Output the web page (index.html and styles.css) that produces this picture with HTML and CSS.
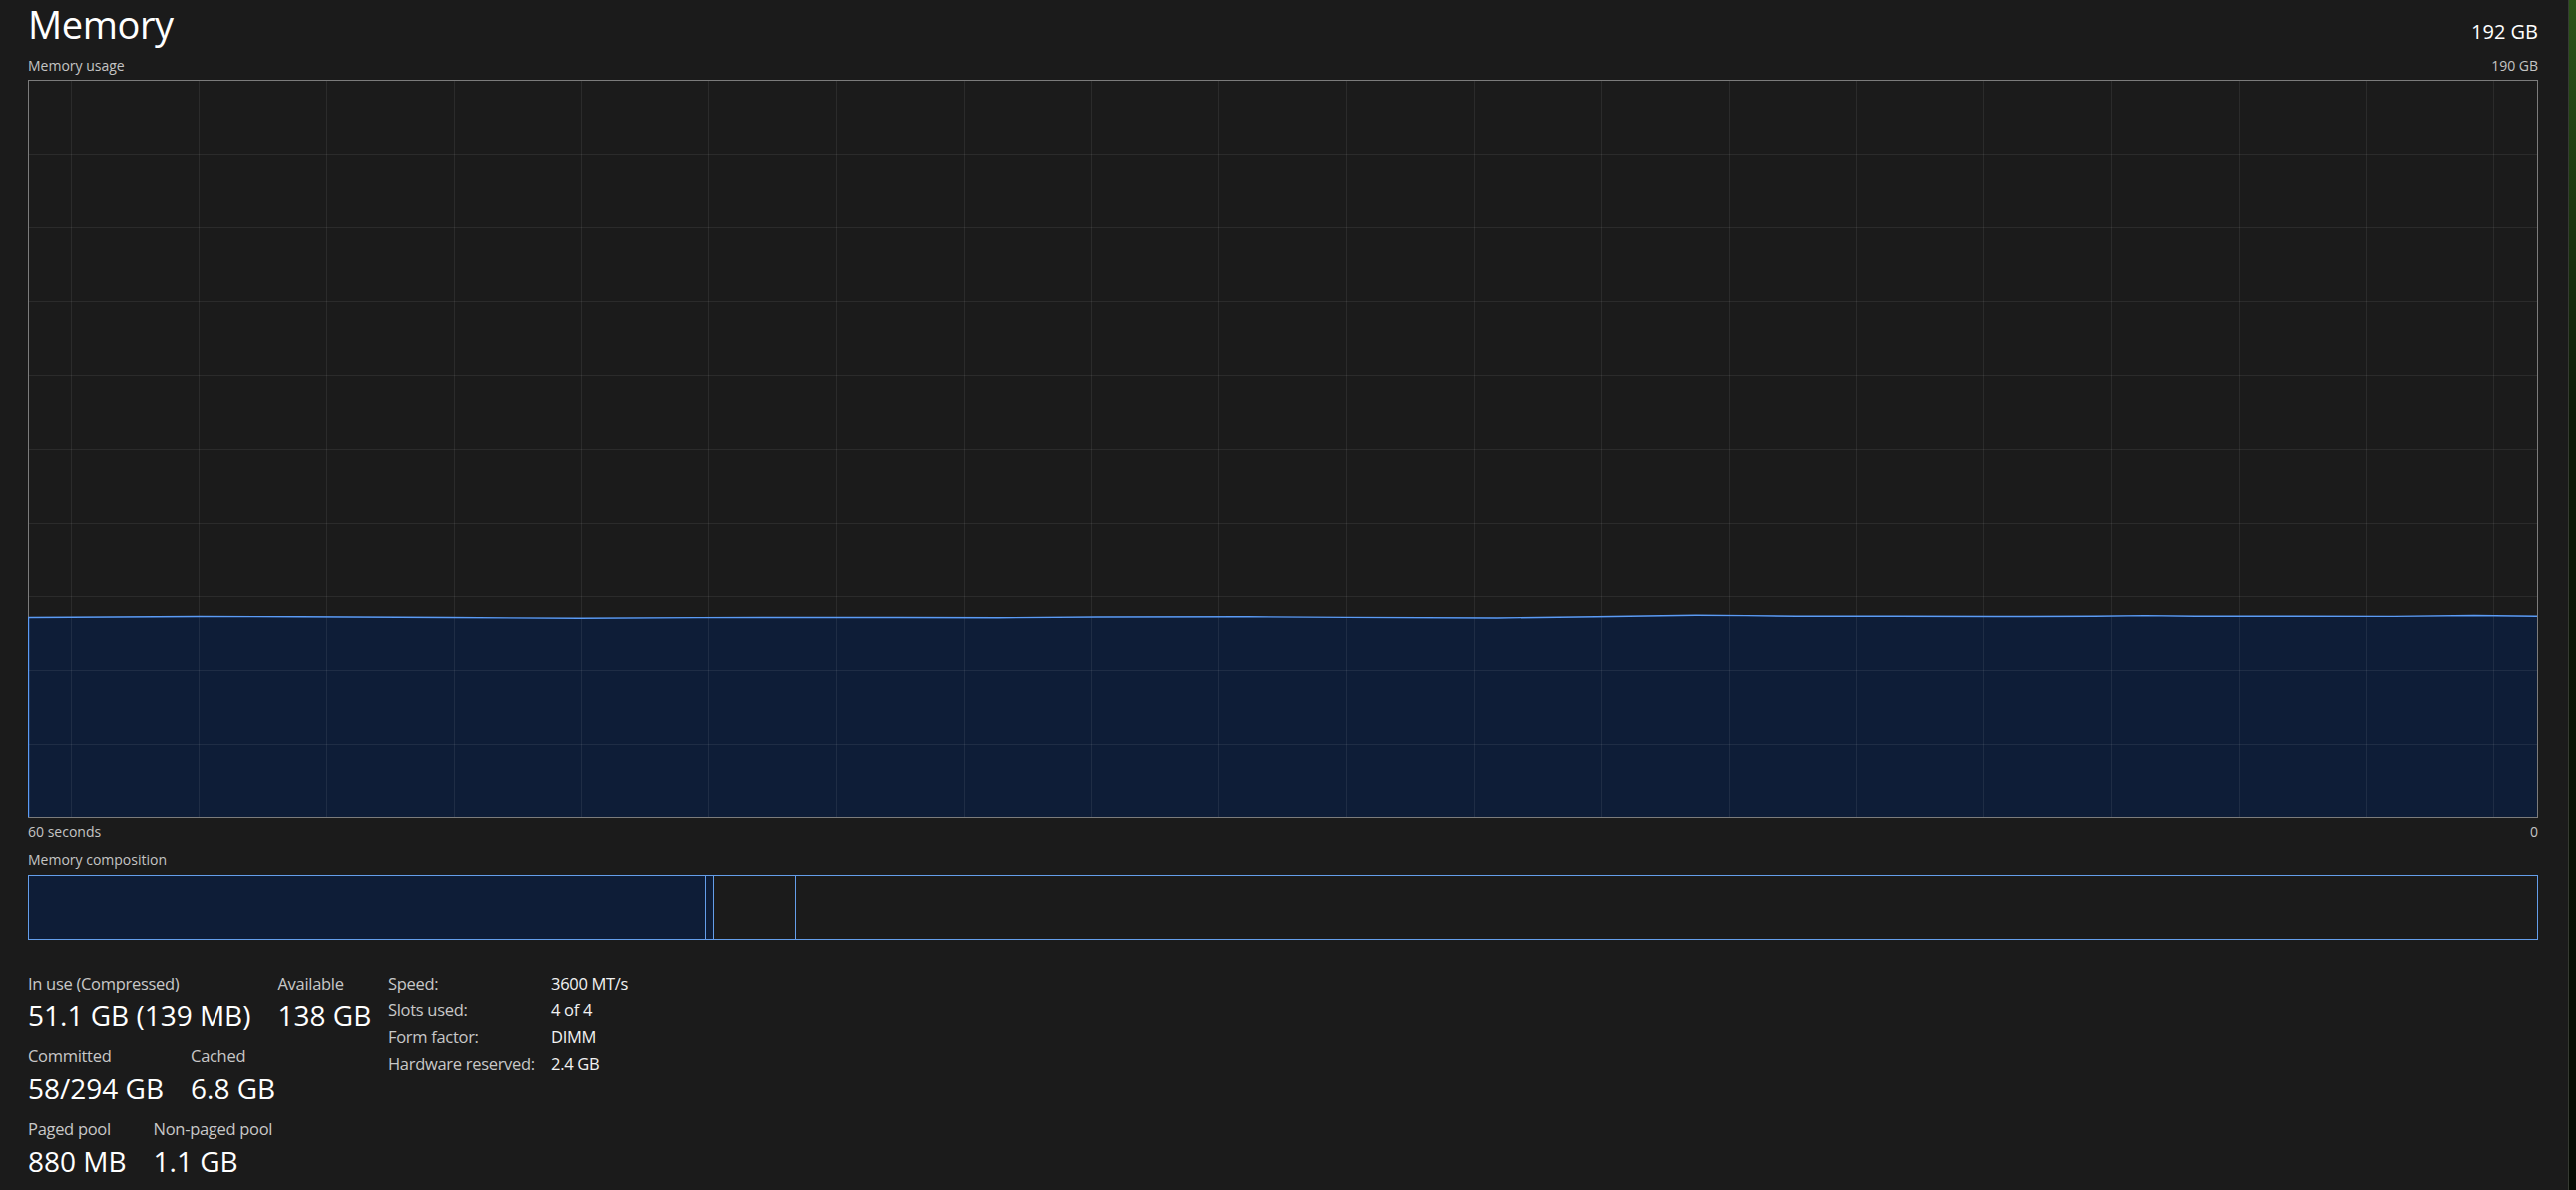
FILE: index.html
```html
<!DOCTYPE html>
<html lang="en">
<head>
    <meta charset="UTF-8">
    <meta name="viewport" content="width=device-width, initial-scale=1.0">
    <title>Memory</title>
    <link rel="stylesheet" href="styles.css">
</head>
<body>
    <div class="window">
        <header class="head">
            <h1 class="title">Memory</h1>
            <span class="total">192 GB</span>
        </header>

        <div class="axis-row axis-top">
            <span>Memory usage</span>
            <span>190 GB</span>
        </div>

        <div class="graph">
            <svg width="2516" height="740" viewBox="0 0 2516 740">
                <!-- used memory area -->
                <polygon class="area" points="0.5,539.5 172,538.5 272,538.8 422,539.5 552,540.3 672,539.6 872,539.5 972,539.8 1072,539 1222,538.7 1322,539.4 1472,540 1572,538.7 1672,537.3 1722,537.6 1772,538.3 1872,538.3 1972,538.5 2072,538.3 2122,537.6 2172,538.3 2272,538.3 2372,538.4 2452,537.5 2515,538.3 2515,739 0.5,739"/>

                <g class="grid">
                    <line x1="1" y1="74.5" x2="2515" y2="74.5"/>
                    <line x1="1" y1="148.5" x2="2515" y2="148.5"/>
                    <line x1="1" y1="222.5" x2="2515" y2="222.5"/>
                    <line x1="1" y1="296.5" x2="2515" y2="296.5"/>
                    <line x1="1" y1="370.5" x2="2515" y2="370.5"/>
                    <line x1="1" y1="444.5" x2="2515" y2="444.5"/>
                    <line x1="1" y1="518.5" x2="2515" y2="518.5"/>
                    <line x1="1" y1="592.5" x2="2515" y2="592.5"/>
                    <line x1="1" y1="666.5" x2="2515" y2="666.5"/>

                    <line x1="43.5" y1="1" x2="43.5" y2="739"/>
                    <line x1="171.5" y1="1" x2="171.5" y2="739"/>
                    <line x1="299.5" y1="1" x2="299.5" y2="739"/>
                    <line x1="427.5" y1="1" x2="427.5" y2="739"/>
                    <line x1="554.5" y1="1" x2="554.5" y2="739"/>
                    <line x1="682.5" y1="1" x2="682.5" y2="739"/>
                    <line x1="810.5" y1="1" x2="810.5" y2="739"/>
                    <line x1="938.5" y1="1" x2="938.5" y2="739"/>
                    <line x1="1066.5" y1="1" x2="1066.5" y2="739"/>
                    <line x1="1193.5" y1="1" x2="1193.5" y2="739"/>
                    <line x1="1321.5" y1="1" x2="1321.5" y2="739"/>
                    <line x1="1449.5" y1="1" x2="1449.5" y2="739"/>
                    <line x1="1577.5" y1="1" x2="1577.5" y2="739"/>
                    <line x1="1705.5" y1="1" x2="1705.5" y2="739"/>
                    <line x1="1832.5" y1="1" x2="1832.5" y2="739"/>
                    <line x1="1960.5" y1="1" x2="1960.5" y2="739"/>
                    <line x1="2088.5" y1="1" x2="2088.5" y2="739"/>
                    <line x1="2216.5" y1="1" x2="2216.5" y2="739"/>
                    <line x1="2344.5" y1="1" x2="2344.5" y2="739"/>
                    <line x1="2471.5" y1="1" x2="2471.5" y2="739"/>
                </g>

                <rect class="frame" x="0.5" y="0.5" width="2515" height="739"/>

                <polyline class="usage" points="0.5,739 0.5,539.5 172,538.5 272,538.8 422,539.5 552,540.3 672,539.6 872,539.5 972,539.8 1072,539 1222,538.7 1322,539.4 1472,540 1572,538.7 1672,537.3 1722,537.6 1772,538.3 1872,538.3 1972,538.5 2072,538.3 2122,537.6 2172,538.3 2272,538.3 2372,538.4 2452,537.5 2515,538.3"/>
            </svg>
        </div>

        <div class="axis-row axis-bottom">
            <span>60 seconds</span>
            <span>0</span>
        </div>

        <div class="caption">Memory composition</div>
        <div class="composition">
            <div class="seg seg-used" style="width: 679px"></div>
            <div class="seg seg-used" style="width: 8px"></div>
            <div class="seg" style="width: 82px"></div>
            <div class="seg seg-free"></div>
        </div>

        <div class="stats">
            <div class="stats-main">
                <div class="stat-row">
                    <div class="stat">
                        <div class="stat-label">In use (Compressed)</div>
                        <div class="stat-value">51.1 GB (139 MB)</div>
                    </div>
                    <div class="stat">
                        <div class="stat-label">Available</div>
                        <div class="stat-value">138 GB</div>
                    </div>
                </div>
                <div class="stat-row">
                    <div class="stat">
                        <div class="stat-label">Committed</div>
                        <div class="stat-value">58/294 GB</div>
                    </div>
                    <div class="stat">
                        <div class="stat-label">Cached</div>
                        <div class="stat-value">6.8 GB</div>
                    </div>
                </div>
                <div class="stat-row">
                    <div class="stat">
                        <div class="stat-label">Paged pool</div>
                        <div class="stat-value">880 MB</div>
                    </div>
                    <div class="stat">
                        <div class="stat-label">Non-paged pool</div>
                        <div class="stat-value">1.1 GB</div>
                    </div>
                </div>
            </div>

            <dl class="specs">
                <dt>Speed:</dt><dd>3600 MT/s</dd>
                <dt>Slots used:</dt><dd>4 of 4</dd>
                <dt>Form factor:</dt><dd>DIMM</dd>
                <dt>Hardware reserved:</dt><dd>2.4 GB</dd>
            </dl>
        </div>
    </div>
    <div class="desktop"></div>
</body>
</html>
```

FILE: styles.css
```css
* {
    margin: 0;
    padding: 0;
    box-sizing: border-box;
}

body {
    font-family: 'Open Sans', 'Noto Sans', sans-serif;
    background: #1b1b1b;
    color: #ffffff;
    height: 100vh;
    display: flex;
    overflow: hidden;
}

.window {
    flex: 1;
    padding: 0 30px 0 28px;
    border-right: 1px solid #363a33;
}

.desktop {
    width: 7px;
    background: linear-gradient(#2c5419, #0d1a07 35%, #060b03);
}

.head {
    display: flex;
    justify-content: space-between;
    align-items: baseline;
    height: 48px;
}

.title {
    font-size: 38px;
    font-weight: 400;
    line-height: 48px;
    letter-spacing: -0.4px;
}

.total {
    font-size: 20px;
    line-height: 48px;
}

.axis-row {
    display: flex;
    justify-content: space-between;
    font-size: 14px;
    line-height: 20px;
    color: #c4c4c4;
}

.axis-top {
    margin: 8px 0 4px;
}

.axis-bottom {
    margin-top: 4px;
}

.graph svg {
    display: block;
}

.graph .area {
    fill: #0e1d37;
}

.graph .grid line {
    stroke: rgba(255, 255, 255, 0.075);
    stroke-width: 1;
}

.graph .frame {
    fill: none;
    stroke: #7c7c7c;
    stroke-width: 1;
}

.graph .usage {
    fill: none;
    stroke: #5b9bf5;
    stroke-width: 1.4;
}

.caption {
    margin-top: 8px;
    font-size: 14px;
    line-height: 20px;
    color: #c4c4c4;
}

.composition {
    margin-top: 5px;
    height: 65px;
    display: flex;
    border: 1px solid #649eea;
}

.seg {
    flex: none;
    border-right: 1px solid #649eea;
}

.seg-used {
    background: #0e1d37;
}

.seg-free {
    flex: 1;
    border-right: none;
}

.stats {
    margin-top: 30px;
    display: flex;
    align-items: flex-start;
    gap: 16px;
}

.stats-main {
    width: 345px;
    display: flex;
    flex-direction: column;
    gap: 9px;
}

.stat-row {
    display: flex;
    gap: 27px;
}

.stat-label {
    font-size: 16.5px;
    line-height: 28px;
    letter-spacing: -0.3px;
    color: #c8c8c8;
}

.stat-value {
    font-size: 28px;
    line-height: 36px;
}

.specs {
    display: grid;
    grid-template-columns: 163px auto;
    align-content: start;
    font-size: 16.5px;
    line-height: 27px;
    letter-spacing: -0.3px;
}

.specs dt {
    color: #c8c8c8;
}

.specs dd {
    color: #f2f2f2;
}
```
